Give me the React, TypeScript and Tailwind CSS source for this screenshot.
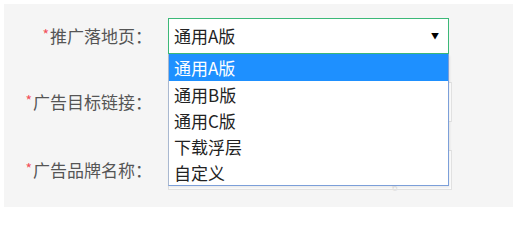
const options = ["通用A版", "通用B版", "通用C版", "下载浮层", "自定义"];

function Label({ text }: { text: string }) {
  return (
    <div className="flex w-[148px] shrink-0 items-center justify-end text-[17px] text-[#555]">
      <span className="mr-[1px] -translate-y-[2px] text-[14px] leading-none text-[#f2505a]">*</span>
      <span>{text}</span>
    </div>
  );
}

export default function App() {
  return (
    <div
      className="h-[207px] w-[513px] bg-white pl-1 pt-1"
      style={{ fontFamily: '"Noto Sans CJK SC", "Noto Sans", sans-serif' }}
    >
      <div className="relative h-full bg-[#f5f5f5] pt-[14px]">
        <div className="flex h-9 items-center">
          <Label text="推广落地页：" />
          <div className="ml-4 flex h-9 w-[281px] items-center justify-between border border-[#3cb878] bg-white pl-[5px] pr-[9px] text-[17px] text-[#222]">
            <span>通用A版</span>
            <span className="text-[8px] leading-none text-black">▼</span>
          </div>
        </div>
        <div className="mt-[28px] flex h-10 items-center">
          <Label text="广告目标链接：" />
          <div className="ml-4 h-10 w-[284px] border border-[#e2e2e2] bg-white" />
        </div>
        <div className="mt-[28px] flex h-10 items-center">
          <Label text="广告品牌名称：" />
          <div className="relative ml-4 h-10 w-[284px] border border-[#e2e2e2] bg-white">
            <span className="absolute left-[223px] top-[31px] text-[10px] leading-none text-[#e4e4e4]">6</span>
          </div>
        </div>

        <ul className="absolute left-[164px] top-[50px] w-[281px] border border-t-0 border-[#7c9fd9] border-l-[#a9b8d0] bg-white text-[17px] text-[#222] shadow-[1px_2px_2px_rgba(0,0,0,0.08)]">
          {options.map((o, i) => (
            <li
              key={o}
              className={`flex items-center pl-[5px] leading-none ${
                i === 0 ? "h-[27px] bg-[#1e90ff] text-white" : "h-[26px]"
              }`}
            >
              {o}
            </li>
          ))}
        </ul>
      </div>
    </div>
  );
}
